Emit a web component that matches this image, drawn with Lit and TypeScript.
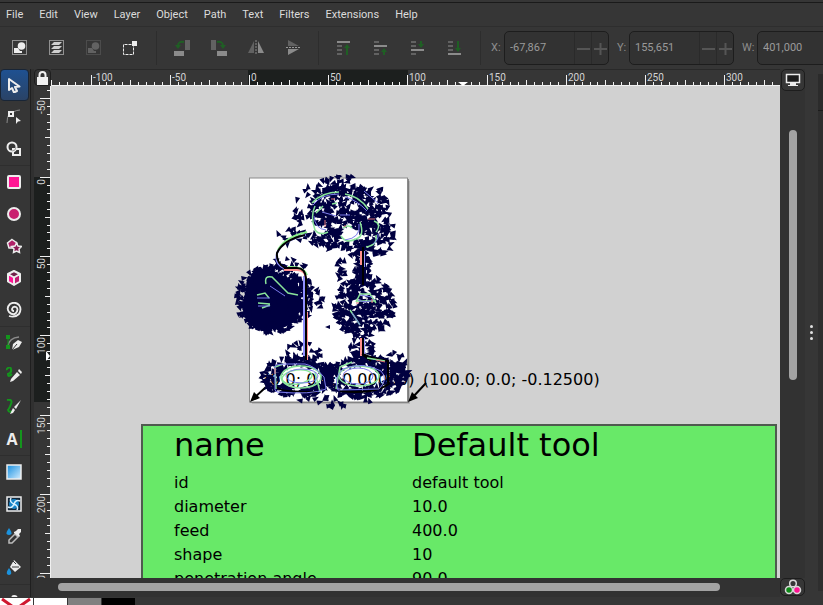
import { LitElement, html, svg, css, nothing } from "lit";
import { customElement, property, state } from "lit/decorators.js";

/* ---------- icons ---------- */

const marquee = (c: string) => svg`<rect x=".5" y=".5" width="14" height="14" fill="none" stroke=${c} stroke-dasharray="1 1"/>`;
const W = "#ededed";
const D = "#626262";

const actionIcons: Record<string, unknown> = {
  "Select All": svg`${marquee(W)}<circle cx="9.5" cy="6" r="3.8" fill=${W}/><path d="M2 8h4l2 3h2v2H2z" fill=${W}/>`,
  "Select All in All Layers": svg`${marquee(W)}<path d="M5 2h8l-3 3H2zM5 6h8l-3 3H2zM5 10h8l-3 3H2z" fill="#cfcfcf"/>`,
  "Deselect": svg`${marquee(D)}<circle cx="9.5" cy="6" r="3.8" fill=${D}/><path d="M2 8h4l2 3h2v2H2z" fill=${D}/>`,
  "Touch Selection": svg`<path d="M.5 4.500v10h10v-10z" fill="none" stroke=${W} stroke-dasharray="3 1"/><path d="M9 1h5v5H9z" fill=${W}/>`,
  "Rotate Left": svg`<path d="M0 11h10v5H0z" fill="#8b8b8b"/><path d="M11 0h5v10h-5z" fill=${D}/><path d="M10 2Q4 1 4 6" fill="none" stroke="#1f5f24" stroke-width="2"/><path d="M1 5h6L4 9z" fill="#1f5f24"/>`,
  "Rotate Right": svg`<path d="M6 11h10v5H6z" fill="#8b8b8b"/><path d="M0 0h5v10H0z" fill=${D}/><path d="M6 2q6-1 6 4" fill="none" stroke="#1f5f24" stroke-width="2"/><path d="M9 5h6l-3 4z" fill="#1f5f24"/>`,
  "Flip Horizontal": svg`<path d="M6 1v12H0z" fill=${D}/><path d="M10 1v12h6z" fill="#8b8b8b"/><path d="M8 0v15" stroke="#8b8b8b" stroke-dasharray="2 1"/>`,
  "Flip Vertical": svg`<path d="M3 6h11L3 0z" fill=${D}/><path d="M3 9h11L3 15z" fill="#8b8b8b"/><path d="M1 7.500h15" stroke="#9a9a9a" stroke-dasharray="2 1"/>`,
  "Raise to Top": svg`<path d="M1 1h13v2H1z" fill="#8b8b8b"/><path d="M1 5h5v2H1zM1 9h5v2H1zM1 13h5v2H1z" fill=${D}/><path d="M11 15V6" stroke="#1f5f24" stroke-width="2"/><path d="M8 8h6l-3-4z" fill="#1f5f24"/>`,
  "Raise": svg`<path d="M1 5h13v2H1z" fill="#8b8b8b"/><path d="M1 1h5v2H1zM1 9h5v2H1zM1 13h5v2H1z" fill=${D}/><path d="M11 15v-5" stroke="#1f5f24" stroke-width="2"/><path d="M8 12h6l-3-4z" fill="#1f5f24"/>`,
  "Lower": svg`<path d="M1 9h13v2H1z" fill="#8b8b8b"/><path d="M1 1h5v2H1zM1 5h5v2H1zM1 13h5v2H1z" fill=${D}/><path d="M11 1v5" stroke="#1f5f24" stroke-width="2"/><path d="M8 4h6l-3 4z" fill="#1f5f24"/>`,
  "Lower to Bottom": svg`<path d="M1 13h13v2H1z" fill="#8b8b8b"/><path d="M1 1h5v2H1zM1 5h5v2H1zM1 9h5v2H1z" fill=${D}/><path d="M11 1v9" stroke="#1f5f24" stroke-width="2"/><path d="M8 8h6l-3 4z" fill="#1f5f24"/>`,
};

const toolIcons: Record<string, unknown> = {
  "Selector": svg`<path d="M3 2v11l3-2 2 4.500 3-1.500-2-4 4.500-.5z" fill="none" stroke="#ededed" stroke-width="2" stroke-linejoin="round"/>`,
  "Node": svg`<path d="M1 14Q1 8 3 5M7 3q4-2 7-2" fill="none" stroke="#8b8b8b"/><path d="M3 3h4v4H3z" fill="none" stroke="#ededed" stroke-width="2"/><path d="M10 8l5 4-3 .5L10 15z" fill="#ededed"/>`,
  "Shape Builder": svg`<circle cx="6" cy="6" r="4.500" fill="none" stroke="#ededed" stroke-width="2"/><path d="M7 8h7v6H7z" fill="none" stroke="#ededed" stroke-width="2"/><path d="M6 10q4 0 4-4" fill="none" stroke="#a0a0a0"/>`,
  "Rectangle": svg`<rect x="2" y="2" width="12" height="12" rx="1" fill="#ff1493" stroke="#ededed" stroke-width="2"/>`,
  "Ellipse": svg`<circle cx="8" cy="8" r="6" fill="#c9206f" stroke="#ededed" stroke-width="2"/>`,
  "Star": svg`<path d="M6 1.500l5 3.500-1 5H3L1.500 5z" fill="#b02068" stroke="#ededed" stroke-width="1.500"/><path d="M10.500 5l1.500 3 3.500.5-2.500 2.500.5 3.500-3-1.500-3 1.500.5-3.500L5.500 8.500 9 8z" fill="#8a1c55" stroke="#ededed" stroke-width="1.500"/>`,
  "3D Box": svg`<path d="M8 1l6 3v7l-6 4-6-4V4z" fill="#c01870"/><path d="M2 5l6 3v7l-6-4z" fill="#ff1493"/><path d="M8 1l6 3-6 4-6-4z" fill="#702048"/><path d="M8 1l6 3v7.500L8 15l-6-3.500V4zM2 4l6 3.500L14 4M8 7.500V15" fill="none" stroke="#ededed" stroke-width="2" stroke-linejoin="round"/>`,
  "Spiral": svg`<path d="M3 14q6 2 10-2 3-5 0-9-4-4-9-1-4 4-1 8 4 4 7 1 3-4 0-6-3-1-4 2 0 2 2 2" fill="none" stroke="#ededed" stroke-width="1.800"/>`,
  "Pen": svg`<path d="M2 11Q3 3 13 2" fill="none" stroke="#8b8b8b" stroke-width="1.500"/><path d="M0 0h4v4H0zM0 10h4v4H0z" fill="#14951d"/><path d="M2 3v8" stroke="#14951d"/><path d="M6 15l1-6 5-4 4 2-3 5z" fill="#ededed"/><path d="M6 15l5-6" stroke="#363636"/>`,
  "Pencil": svg`<path d="M0 3q4-5 5-1T2 7q0 4 4 0" fill="none" stroke="#14951d" stroke-width="2"/><path d="M5 12l6-7 3 3-7 6-3 1zM12 4l1-2 3 3-1 2z" fill="#ededed"/>`,
  "Calligraphy": svg`<path d="M1 1q6-1 4 4t-3 6q1 3 5 1" fill="none" stroke="#14951d" stroke-width="2"/><path d="M15 1l-5 9-2-2zM7 9l2 2-2 3-3 1z" fill="#ededed"/>`,
  "Text": nothing,
  "Gradient": svg`<defs><linearGradient id="g" x2="1" y2="1"><stop stop-color="#138ee0"/><stop offset="1" stop-color="#d4edff"/></linearGradient></defs><rect x="1" y="1" width="14" height="14" fill="url(#g)" stroke="#ededed" stroke-width="1.500"/>`,
  "Mesh": svg`<rect x="1" y="1" width="14" height="14" fill="#122638" stroke="#ededed" stroke-width="1.500"/><circle cx="8" cy="8" r="5" fill="#1684c8"/><path d="M8 8Q3 6 5 2M8 8q5 2 3 6M8 8q-2 5-6 3M8 8q2-5 6-3" fill="none" stroke="#d9f1ff" stroke-width="1.500"/>`,
  "Dropper": svg`<path d="M3 0q3 4 2.500 6-2.500 2-5 0Q0 4 3 0z" fill="#1b92dd"/><path d="M9 6l3 3-6 6H3v-3z" fill="none" stroke="#bcbcbc" stroke-width="1.500"/><path d="M8 4l2-1 2-2h3v3l-2 2 1 2-1 1-5-4z" fill="#ededed"/>`,
  "Paint Bucket": svg`<path d="M8 0l7 7-6 5-5-5z" fill="#ededed"/><path d="M10 4L7 1M6 7h7" stroke="#363636"/><path d="M3 8q3 4 2 6-2 2-4 0-1-2 2-6z" fill="#1b92dd"/>`,
  "Tweak": svg`<path d="M6 4q2-2 5 0" fill="none" stroke="#ededed" stroke-width="2"/>`,
};

const toolGroups = [
  ["Selector", "Node", "Shape Builder"],
  ["Rectangle", "Ellipse", "Star", "3D Box", "Spiral"],
  ["Pen", "Pencil", "Calligraphy", "Text"],
  ["Gradient", "Mesh", "Dropper", "Paint Bucket"],
  ["Tweak"],
];

/* ---------- rulers ---------- */

const SCALE = 1.584;

@customElement("canvas-ruler")
export class CanvasRuler extends LitElement {
  @property() axis: "x" | "y" = "x";
  @property({ type: Number }) origin = 0;
  @property({ type: Number }) pageSize = 0;
  @property({ type: Number }) pointer = 0;
  @state() private extent = 0;

  private observer = new ResizeObserver(([entry]) => {
    const { width, height } = entry.contentRect;
    this.extent = Math.max(width, height);
  });

  connectedCallback() {
    super.connectedCallback();
    this.observer.observe(this);
  }

  disconnectedCallback() {
    this.observer.disconnect();
    super.disconnectedCallback();
  }

  static styles = css`
    :host { display: block; min-width: 0; min-height: 0; overflow: hidden; background: #363636; }
    svg { display: block; width: 100%; height: 100%; }
    text { font: 10px Roboto, sans-serif; fill: #d4d4d4; }
  `;

  render() {
    const across = this.axis === "x";
    const marks = [];
    const first = Math.ceil(-this.origin / SCALE / 5) * 5;
    for (let u = first; this.origin + u * SCALE < this.extent; u += 5) {
      const p = Math.round(this.origin + u * SCALE);
      const major = u % 50 === 0;
      const len = major ? 10 : u % 25 === 0 ? 5 : 3;
      marks.push(across
        ? svg`<rect x=${p} y=${16 - len} width="1" height=${len} fill="#f0f0f0"/>`
        : svg`<rect x=${16 - len} y=${p} width=${len} height="1" fill="#f0f0f0"/>`);
      if (major) {
        marks.push(across
          ? svg`<text x=${p + 2} y="12">${u}</text>`
          : svg`<text text-anchor="end" transform=${`translate(11 ${p + 2}) rotate(-90)`}>${u}</text>`);
      }
    }
    const q = this.pointer;
    return across
      ? html`<svg><rect x=${this.origin - 1} width=${this.pageSize} height="17" fill="#1c1f1e"/><rect width="100%" height="1" fill="#292929"/>
          ${marks}<rect y="16" width="100%" height="1" fill="#f0f0f0"/><path d=${`M${q - 5} 13h10l-5 4z`} fill="#fff"/></svg>`
      : html`<svg><rect y=${this.origin} width="17" height=${this.pageSize} fill="#1c1f1e"/>
          ${marks}<rect x="16" width="1" height="100%" fill="#f0f0f0"/><path d=${`M12 ${q - 5}v10l4-5z`} fill="#fff"/></svg>`;
  }
}

/* ---------- artwork ---------- */

function random(seed: number) {
  return () => {
    seed = (seed + 0x6d2b79f5) | 0;
    let t = Math.imul(seed ^ (seed >>> 15), 1 | seed);
    t = (t + Math.imul(t ^ (t >>> 7), 61 | t)) ^ t;
    return ((t ^ (t >>> 14)) >>> 0) / 4294967296;
  };
}

type Oval = [cx: number, cy: number, rx: number, ry: number];

/* Direction arrows scattered over an oval, leaving the listed gaps free. */
function scatter(seed: number, [cx, cy, rx, ry]: Oval, count: number, gaps: Oval[] = [], inner = 0) {
  const rnd = random(seed);
  let d = "";
  for (let i = 0; i < count; i++) {
    const a = rnd() * Math.PI * 2;
    const r = inner + (1 - inner) * Math.sqrt(rnd());
    const x = cx + Math.cos(a) * r * rx;
    const y = cy + Math.sin(a) * r * ry;
    const turn = rnd() * Math.PI * 2;
    if (gaps.some(([gx, gy, gw, gh]) => ((x - gx) / gw) ** 2 + ((y - gy) / gh) ** 2 < 1)) continue;
    const at = (len: number, off: number) =>
      `${(x + Math.cos(turn + off) * len).toFixed(1)} ${(y + Math.sin(turn + off) * len).toFixed(1)}`;
    d += `M${at(4, 0)}L${at(3.5, 2.35)}L${at(3.5, -2.35)}z`;
  }
  return d;
}

const face: Oval[] = [[350, 235, 10, 8], [320, 229, 6, 4], [336, 225, 4, 4], [336, 210, 4, 3], [320, 209, 5, 3], [356, 208, 4, 3]];
const soles: Oval[] = [[300, 377, 21, 11], [360, 376, 21, 11]];

const arrows = [
  scatter(3, [343, 210, 36, 26], 330, face),
  scatter(4, [343, 212, 49, 36], 85, face, 0.6),
  scatter(5, [379, 231, 17, 24], 75, face),
  scatter(6, [324, 237, 20, 13], 38, face),
  scatter(20, [358, 249, 16, 8], 30, face),
  scatter(7, [293, 236, 20, 9], 13),
  scatter(8, [362, 264, 9, 18], 36),
  scatter(9, [272, 299, 36, 34], 480),
  scatter(10, [301, 300, 22, 21], 70),
  scatter(11, [292, 263, 20, 6], 11),
  scatter(12, [364, 306, 31, 32], 300),
  scatter(13, [341, 268, 6, 12], 11),
  scatter(14, [362, 350, 14, 12], 32),
  scatter(15, [303, 354, 18, 14], 28),
  scatter(16, [297, 377, 36, 20], 190, soles, 0.35),
  scatter(17, [365, 377, 42, 21], 230, soles, 0.35),
  scatter(18, [330, 394, 48, 14], 42, soles),
  scatter(19, [393, 369, 17, 16], 55),
].join("");

const artwork = svg`
  <rect x="252" y="181" width="158" height="223" fill="#000" opacity=".13"/>
  <rect x="250" y="179" width="159" height="224" fill="#555" opacity=".6"/>
  <rect x="249.500" y="178" width="158" height="224" fill="#fff" stroke="#8b8b8b"/>
  <text x="264" y="385">(0.0; 0.0; 0.00000)</text>
  <text x="423" y="385">(100.0; 0.0; -0.12500)</text>
  <g stroke="#000" stroke-width="2"><path d="M266 387l-12 11M426 383l-14 15"/></g>
  <path d="M250 402l4-10 6 6zM408 402l4-10 6 6z"/>
  <path fill="#000040" d="M246 290l6-12 10-9 12 2 13 7 10 5 4 10v14l-5 14-11 6-18 3-11-1-10-8-4-15zM359 264h7v20h-7z"/>
  <path fill="#000040" d=${arrows}/><path fill="#000040" d="M325 327l5-2v4zM286 256l4 4-5 1z"/>
  <g fill="none" stroke-width="2">
    <path d="M306 235q-22 5-28 16-5 12 6 17M304 276v80M364 251v16M364 338v18" stroke="#9090ff"/>
    <path d="M284 270h13q8 0 9 8M307 312v48M361 251v14M361 338v18" stroke="#ff9090"/>
    <path d="M307 232q-22 5-29 18M288 267q16-1 19 8" stroke="#8bf08b"/>
    <path d="M305 235q-22 5-28 18-1 10 8 15h12q8 0 9 10v82M363 247v38M363 338v17l8 6" stroke="#000"/>
    <path d="M277 387q2 5 40 5M340 391q35 4 50-8M362 354q12 5 26 7v22" stroke="#000"/>
  </g>
  <g fill="none" stroke="#89e49a" stroke-width="1.500">
    <path d="M312 203q10-11 27-11M345 194q14 2 23 15M315 206q-5 10 0 24 5 6 13 2M316 213l7-7M332 204l5-1M360 222q5 14-4 17-10 5-15-3M374 221q8 3 2 11M366 247q12-2 10-12M343 228q6-4 9 0"/>
    <path d="M266 284q-2-9 6-7l8 8 8 8 10 2M257 295l8-2 4 5M258 303l12 1M262 308l8-3M350 310l10 15M356 302l4-8h10l6 9M356 301h20"/>
    <ellipse cx="301" cy="377" rx="20" ry="11"/><ellipse cx="297" cy="377" rx="15" ry="7" transform="rotate(-8 297 377)"/>
    <ellipse cx="359" cy="376" rx="20" ry="10"/><path d="M276 389l-1-22 8-3M320 392l-5-20M336 389l4-22 12-5M367 358l18 3"/>
  </g>
  <g fill="none" stroke="#7c7cec">
    <path d="M313 205q8-11 26-11M345 197q12 3 22 14M314 216q1 13 12 14M359 224q2 14-14 16M270 286l15 10M257 298h13M258 306h12M352 313l8 12M358 300q9 4 16-1M360 295l12 2M364 191l14 12M322 212l14 4M340 215h10M373 244q6-4 5-10"/>
    <path d="M275 390V366q0-2 15-2h15q10 2 19 13l2 12q-14 6-49 3zM338 390q-5-12 5-21 20-8 38 2 8 8-2 18z"/>
    <ellipse cx="302" cy="376" rx="16" ry="7"/><ellipse cx="358" cy="376" rx="15" ry="8"/>
  </g>
  <g fill="none" stroke="#e07373"><path d="M331 199h4M325 220v7M368 219h7M356 303h3M372 299v4M275 368v6M376 360l9 2M344 226h2"/></g>
`;

/* ---------- application ---------- */

const menus = ["File", "Edit", "View", "Layer", "Object", "Path", "Text", "Filters", "Extensions", "Help"];
const actionGroups = [
  ["Select All", "Select All in All Layers", "Deselect", "Touch Selection"],
  ["Rotate Left", "Rotate Right", "Flip Horizontal", "Flip Vertical"],
  ["Raise to Top", "Raise", "Lower", "Lower to Bottom"],
];
const fields = [["X:", "-67,867"], ["Y:", "155,651"], ["W:", "401,000"]];
const toolData = [["id", "default tool"], ["diameter", "10.0"], ["feed", "400.0"], ["shape", "10"], ["penetration angle", "90.0"]];

@customElement("app-root")
export class AppRoot extends LitElement {
  static styles = css`
    :host {
      display: grid; grid-template-rows: 27px 42px minmax(0, 1fr) 8px; height: 100vh; overflow: hidden;
      background: #363636; color: #dcdcdc; font: 11px/16px Roboto, sans-serif;
    }
    * { box-sizing: border-box; }
    button { border: 0; margin: 0; padding: 0; background: none; color: inherit; font: inherit; display: grid; place-items: center; }
    svg { display: block; }

    .menus { display: flex; align-items: center; border-top: 1px solid #363636; box-shadow: inset 0 1px #363636, inset 0 2px #1a1a1a, inset 0 -1px #2e2e2e; padding-top: 2px; }
    .menus button { padding: 0 8px; flex: none; }
    .menus button:first-child { padding-left: 6px; }

    .actions { display: flex; align-items: center; padding: 0 1px; overflow: hidden; }
    .actions .action { width: 37px; height: 34px; flex: none; }
    .sep { flex: none; width: 1px; height: 34px; margin: 0 6px 0 7px; background: #2d2d2d; }
    .field { display: flex; align-items: center; flex: none; color: #8d8d8d; margin-right: 8px; }
    .field.first { margin-left: 4px; }
    .field label { width: 12px; }
    .field.first label { width: 13px; }
    .field.wide label { width: 15px; }
    .spin { display: flex; height: 34px; width: 105px; border: 1px solid #1d1d1d; border-radius: 5px; background: #323232; overflow: hidden; }
    .spin input { flex: 1; min-width: 0; border: 0; padding: 0 0 0 5px; background: none; color: #9a9a9a; font: inherit; outline: 0; }
    .spin button { width: 17px; border-left: 1px solid #2a2a2a; color: #555; }

    .main { display: grid; grid-template-columns: 34px 17px minmax(0, 1fr) 25px 13px 5px; grid-template-rows: 17px minmax(0, 1fr) 19px; }
    .tools { grid-row: 1 / 4; overflow: hidden; background: linear-gradient(90deg, #363636 30px, #1f1f1f 30px, #1f1f1f 31px, #303030 31px); }
    .tools ul { list-style: none; margin: 0; padding: 0; width: 30px; border-bottom: 1px solid #2e2e2e; }
    .tools button { width: 29px; height: 32px; padding-right: 1px; border-radius: 4px; }
    .tools .on { background: linear-gradient(#1f5191, #2a4366); border: 1px solid #182536; }
    .letter { font: bold 16px/18px "Open Sans", sans-serif; color: #ededed; border-right: 2px solid #14951d; padding-right: 2px; }
    .lock { border: 1px solid #1e1e1e; border-radius: 4px; }

    .canvas { position: relative; overflow: hidden; background: #d1d1d1; }
    .art { position: absolute; left: 0; top: 0; width: 100%; height: 100%; font: 16px "DejaVu Sans", sans-serif; fill: #000; }
    .card {
      position: absolute; left: 90px; top: 338px; width: 636px; padding-left: 31px;
      background: #68e968; border: 2px solid #4f5a4f; color: #000; font: 16px/24px "DejaVu Sans", sans-serif;
    }
    .card table { border-collapse: collapse; width: 100%; table-layout: fixed; }
    .card td, .card th { padding: 0; height: 24px; text-align: left; vertical-align: top; font-weight: normal; white-space: nowrap; }
    .card .head { font-size: 32px; height: 45px; line-height: 38px; }
    .card .key { width: 238px; }

    .vscroll { grid-column: 4; grid-row: 1 / 3; display: flex; flex-direction: column; align-items: center; background: #323232; }
    .round { width: 24px; height: 22px; border: 1px solid #1d1d1d; border-radius: 5px; background: #363636; }
    .vtrack { flex: 1; width: 8px; padding: 39px 0 198px; display: flex; }
    .thumb { flex: 1; border-radius: 4px; background: #a3a3a3; }
    .grip { grid-column: 5; grid-row: 1 / 4; display: grid; place-content: center; gap: 3px; padding-bottom: 2px; }
    .grip i { width: 3px; height: 3px; border-radius: 2px; background: #e0e0e0; }
    .dock { grid-column: 6; grid-row: 1 / 4; margin: 5px 0 6px; background: linear-gradient(#2b2b2b 36px, #1c1c1c 36px, #1c1c1c 37px, #2e2e2e 37px); }
    .hscroll { grid-column: 2 / 4; grid-row: 3; padding: 5px 60px 6px 24px; display: flex; background: #323232; }
    .cms { grid-column: 4; grid-row: 3; height: 18px; width: 25px; }

    .swatches { display: flex; gap: 1px; padding-top: 1px; }
    .swatches button { width: 33px; height: 7px; overflow: hidden; place-items: start; }
    .none, .white { background: #fff; }
    .gray { background: #808080; }
    .black { background: #000; }
  `;

  private action(name: string) {
    return html`<button class="action" aria-label=${name}><svg width="16" height="16">${actionIcons[name]}</svg></button>`;
  }

  private field([label, value]: string[], i: number) {
    const id = `field${i}`;
    return html`<div class="field ${i === 0 ? "first" : i === 2 ? "wide" : ""}">
      <label for=${id}>${label}</label>
      <div class="spin">
        <input id=${id} type="text" .value=${value} />
        <button aria-label="Decrease"><svg width="13" height="13"><path d="M0 7h13" stroke="currentColor" stroke-width="2"/></svg></button>
        <button aria-label="Increase"><svg width="13" height="13"><path d="M0 7h13M6.500 1v12" stroke="currentColor" stroke-width="2"/></svg></button>
      </div>
    </div>`;
  }

  private tool(name: string) {
    return html`<li><button class=${name === "Selector" ? "on" : ""} aria-label=${name}>
      ${name === "Text" ? html`<span class="letter">A</span>` : html`<svg width="16" height="16">${toolIcons[name]}</svg>`}
    </button></li>`;
  }

  render() {
    return html`
      <nav class="menus">${menus.map((m) => html`<button>${m}</button>`)}</nav>
      <div class="actions">
        ${actionGroups.map((g) => html`${g.map((n) => this.action(n))}<span class="sep"></span>`)}
        ${fields.map((f, i) => this.field(f, i))}
      </div>
      <div class="main">
        <aside class="tools">${toolGroups.map((g) => html`<ul>${g.map((n) => this.tool(n))}</ul>`)}</aside>
        <button class="lock" aria-label="Lock guides">
          <svg width="11" height="14"><path d="M2.500 7V4q0-3 3-3t3 3v3" fill="none" stroke="#f2f2f2" stroke-width="2"/><path d="M0 6h11v8H0z" fill="#f2f2f2"/></svg>
        </button>
        <canvas-ruler axis="x" .origin=${198} .pageSize=${160} .pointer=${412}></canvas-ruler>
        <canvas-ruler axis="y" .origin=${91} .pageSize=${225} .pointer=${270}></canvas-ruler>
        <main class="canvas">
          <div class="card">
            <table>
              <thead><tr><th class="head key" scope="col">name</th><th class="head" scope="col">Default tool</th></tr></thead>
              <tbody>${toolData.map(([k, v]) => html`<tr><td>${k}</td><td>${v}</td></tr>`)}</tbody>
            </table>
          </div>
          <svg class="art"><g transform="translate(-51 -86)">${artwork}</g></svg>
        </main>
        <div class="vscroll">
          <button class="round" aria-label="Display mode">
            <svg width="16" height="14"><path d="M1.500 1.500h13v8h-13z" fill="#1d1d1d" stroke="#ededed" stroke-width="1.500"/><path d="M5 10h6v2H5zM3 12h10v1H3z" fill="#ededed"/></svg>
          </button>
          <div class="vtrack"><div class="thumb"></div></div>
        </div>
        <div class="hscroll"><div class="thumb"></div></div>
        <button class="round cms" aria-label="Color management">
          <svg width="18" height="16" fill="none" stroke="#d8d8d8" stroke-width="1.500"><circle cx="9" cy="4.500" r="3.300"/><circle cx="5" cy="11" r="3.500" fill="#0e8a18"/><circle cx="13" cy="11" r="3.500" fill="#ff1493"/></svg>
        </button>
        <div class="grip"><i></i><i></i><i></i></div>
        <div class="dock"></div>
      </div>
      <footer class="swatches">
        <button class="none" aria-label="No color"><svg width="32" height="14"><path d="M2 1l28 20M30 1L2 21" stroke="#cf1830" stroke-width="3"/></svg></button>
        <button class="white" aria-label="White"></button>
        <button class="gray" aria-label="Gray"></button>
        <button class="black" aria-label="Black"></button>
      </footer>
    `;
  }
}
